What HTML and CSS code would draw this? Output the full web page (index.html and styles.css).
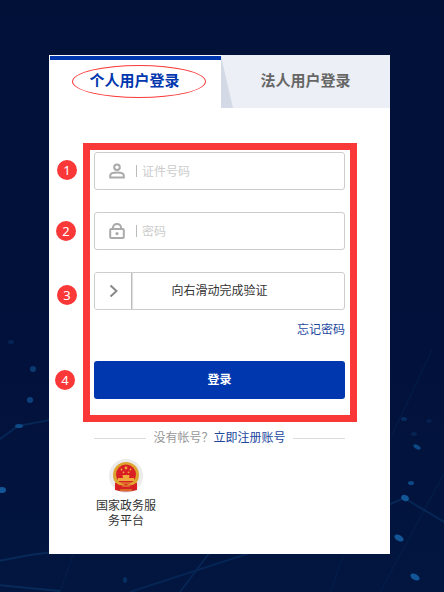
FILE: index.html
```
<!DOCTYPE html>
<html lang="zh-CN">
<head>
  <meta charset="UTF-8">
  <meta name="viewport" content="width=device-width, initial-scale=1.0">
  <title>用户登录</title>
  <link rel="stylesheet" href="styles.css">
</head>
<body>
  <svg class="backdrop" viewBox="0 0 444 592" preserveAspectRatio="xMidYMax slice" aria-hidden="true">
    <g fill="none" stroke="#0c3d73" stroke-width="2">
      <path opacity=".45" d="M-4 442L18 426L50 420L90 414"/>
      <path opacity=".5" d="M-2 561L30 555L60 551M-2 585L60 591"/>
      <path opacity=".4" d="M130 592L250 553M180 592L210 552"/>
      <path opacity=".45" d="M388 505L404 498L446 523"/>
      <path opacity=".15" d="M432 350L392 435M446 470L380 592M60 592L74 552M330 592L345 552"/>
    </g>
    <g fill="#125697">
      <ellipse opacity=".6" cx="33" cy="369" rx="3" ry="3"/>
      <ellipse opacity=".7" cx="30" cy="400" rx="3" ry="3"/>
      <ellipse opacity=".8" cx="19" cy="426" rx="4" ry="2"/>
      <ellipse cx="2" cy="490" rx="4" ry="3"/>
      <ellipse opacity=".25" cx="11" cy="342" rx="3" ry="2"/>
      <ellipse opacity=".4" cx="125" cy="580" rx="2" ry="3"/>
      <ellipse opacity=".4" cx="404" cy="419" rx="3" ry="2"/>
      <ellipse opacity=".2" cx="429" cy="421" rx="3" ry="2"/>
      <ellipse opacity=".25" cx="414" cy="434" rx="3" ry="2"/>
      <ellipse opacity=".8" cx="417" cy="447" rx="4" ry="2" transform="rotate(30 417 447)"/>
      <ellipse opacity=".8" cx="411" cy="483" rx="3" ry="2"/>
      <ellipse cx="405" cy="498" rx="4" ry="3" transform="rotate(25 405 498)"/>
      <ellipse cx="399" cy="538" rx="5" ry="3" transform="rotate(30 399 538)"/>
      <ellipse cx="415" cy="577" rx="5" ry="3" transform="rotate(30 415 577)"/>
    </g>
  </svg>

  <main class="card">
    <div class="tabs" role="tablist">
      <button class="tab tab-active" type="button" role="tab" aria-selected="true">个人用户登录</button>
      <button class="tab" type="button" role="tab" aria-selected="false">法人用户登录</button>
      <span class="ring"></span>
    </div>

    <form class="login">
      <div class="field">
        <label for="account" aria-label="证件号码">
          <svg class="icon" viewBox="0 0 16 16">
            <circle cx="8" cy="4.2" r="2.8"/>
            <path d="M1.2 14.4V12.6C1.2 10.5 4.6 9.6 8 9.6S14.8 10.5 14.8 12.6V14.4Z"/>
          </svg>
        </label>
        <input type="text" id="account" placeholder="证件号码">
      </div>

      <div class="field">
        <label for="password" aria-label="密码">
          <svg class="icon" viewBox="0 0 16 16">
            <rect x="1.2" y="6" width="13.6" height="9" rx="1"/>
            <path d="M4 6V4.6a4 3.7 0 0 1 8 0V6"/>
            <circle class="dot" cx="8" cy="10.6" r="1.6"/>
          </svg>
        </label>
        <input type="password" id="password" placeholder="密码">
      </div>

      <div class="field slide">
        <label for="verify">向右滑动完成验证</label>
        <input type="range" id="verify" min="0" max="100" value="0">
        <svg class="icon arrow" viewBox="0 0 16 16"><path d="M4.5 2.5L10.5 8L4.5 13.5"/></svg>
      </div>

      <a class="forgot" href="#">忘记密码</a>
      <button class="submit" type="submit">登录</button>
    </form>

    <p class="register"><span>没有帐号？<a href="#">立即注册账号</a></span></p>

    <a class="platform" href="#">
      <svg class="emblem" viewBox="0 0 34 34" aria-hidden="true">
        <circle cx="17" cy="17" r="17" fill="#ebebeb"/>
        <path d="M7 24H27L28 31Q17 34 6 31Z" fill="#cf2420"/>
        <circle cx="17" cy="16" r="13" fill="#dda32f"/>
        <circle cx="17" cy="15.5" r="10" fill="#d91f23"/>
        <g fill="#efa93d">
          <circle cx="17" cy="9" r="1.4"/>
          <circle cx="12.5" cy="10.5" r=".9"/>
          <circle cx="21.5" cy="10.5" r=".9"/>
          <circle cx="14.5" cy="13.3" r=".9"/>
          <circle cx="19.5" cy="13.3" r=".9"/>
          <path d="M13 17.5L14 16H20L21 17.5ZM14 17.5H20V19H25V22H9V19H14Z"/>
        </g>
        <path d="M6 23.5Q12 28 17 25Q22 28 28 23.5V31Q22 28 17 30Q12 28 6 31Z" fill="#d91f23"/>
        <path d="M10 24H24M13 27H21M11 31H23" stroke="#e6a934" stroke-width="1"/>
      </svg>
      <span>国家政务服务平台</span>
    </a>

    <span class="step step-1">1</span>
    <span class="step step-2">2</span>
    <span class="step step-3">3</span>
    <span class="step step-4">4</span>
  </main>
</body>
</html>
```
FILE: styles.css
```
* {
  box-sizing: border-box;
}
body {
  margin: 0;
  min-height: 100vh;
  padding: 55px 54px 38px 49px;
  background: linear-gradient(#011138, #02113b 60%, #02163f);
  font-family: "Noto Sans", "Noto Sans CJK SC", sans-serif;
  font-size: 12px;
  line-height: 16px;
  color: #333;
}
button,
input {
  font: inherit;
}
a {
  color: #1d479e;
  text-decoration: none;
}
.backdrop {
  position: absolute;
  top: 0;
  left: 0;
  width: 100%;
  height: 100%;
}
.card {
  position: relative;
  padding: 1px 0 26px 1px;
  background: #fff;
}

/* Tabs */
.tabs {
  position: relative;
  display: flex;
}
.tab {
  position: relative;
  flex: 1;
  height: 52px;
  padding: 0 0 4px;
  border: none;
  background: #eceff5;
  box-shadow: 0 -1px #eceff5;
  color: #666;
  font-size: 15px;
  font-weight: bold;
  cursor: pointer;
}
.tab-active {
  border-top: 4px solid #0037ae;
  padding: 0 2px 8px 0;
  background: #fff;
  box-shadow: none;
  color: #0037ae;
}
.tab:not(.tab-active)::before {
  content: "";
  position: absolute;
  top: 0;
  left: 0;
  width: 12px;
  height: 52px;
  background: #d3dae5;
  clip-path: polygon(0 0, 0 100%, 100% 100%);
}
.ring {
  position: absolute;
  top: 9px;
  left: 22px;
  width: 134px;
  height: 33px;
  border: 1px solid #fb3838;
  border-radius: 50%;
}

/* Login form */
.login {
  display: flex;
  flex-direction: column;
  margin: 35px 33px 0;
  padding: 2px 5px 16px 4px;
  border: 7px solid #fb3838;
}
.field {
  display: flex;
  align-items: center;
  height: 38px;
  margin-bottom: 22px;
  border: 1px solid #ccc;
  border-radius: 3px;
}
.field label {
  display: flex;
  align-items: center;
  padding: 0 11px 0 14px;
}
.field input {
  flex: 1;
  min-width: 0;
  height: 12px;
  padding: 0 5px;
  border: none;
  border-left: 1px solid #bbb;
  background: none;
  line-height: 12px;
  outline: none;
}
.field input::placeholder {
  color: #ccc;
  overflow: visible;
}
.icon {
  width: 16px;
  height: 16px;
  fill: none;
  stroke: #aaa;
  stroke-width: 2;
}
.icon .dot {
  fill: #aaa;
  stroke: none;
}

/* Slide to verify */
.slide {
  display: grid;
  margin-bottom: 12px;
}
.slide > * {
  grid-area: 1 / 1;
}
.slide label {
  justify-content: center;
  padding: 0;
}
.slide input {
  appearance: none;
  width: 100%;
  height: 36px;
  margin: 0;
  padding: 0;
  border: none;
}
.slide input::-webkit-slider-thumb {
  appearance: none;
  width: 37px;
  height: 36px;
  border-right: 1px solid #bbb;
  border-radius: 2px 0 0 2px;
  background: #fff;
  box-shadow: 1px 0 1px #ddd;
}
.arrow {
  margin-left: 11px;
  stroke: #888;
  pointer-events: none;
}
.forgot {
  align-self: flex-end;
  margin-bottom: 23px;
}
.submit {
  height: 38px;
  border: none;
  border-radius: 3px;
  background: #0037ae;
  color: #fff;
  font-weight: bold;
  cursor: pointer;
}

/* Below the form */
.register {
  display: flex;
  align-items: center;
  gap: 7px;
  margin: 8px 45px 0 44px;
  color: #999;
}
.register::before,
.register::after {
  content: "";
  flex: 1;
  height: 1px;
  background: #ddd;
}
.platform {
  display: block;
  width: 64px;
  margin: 13px 0 0 44px;
  padding: 0 2px;
  color: #333;
  line-height: 15px;
  text-align: center;
}
.emblem {
  display: block;
  width: 34px;
  height: 34px;
  margin: 0 auto 5px;
}

/* Numbered markers beside the form */
.step {
  position: absolute;
  width: 20px;
  height: 20px;
  border-radius: 50%;
  background: #fb3838;
  color: #fff;
  font-size: 13px;
  line-height: 20px;
  text-align: center;
}
.step-1 {
  top: 105px;
  left: 8px;
}
.step-2 {
  top: 166px;
  left: 7px;
}
.step-3 {
  top: 230px;
  left: 8px;
}
.step-4 {
  top: 315px;
  left: 6px;
}
```
